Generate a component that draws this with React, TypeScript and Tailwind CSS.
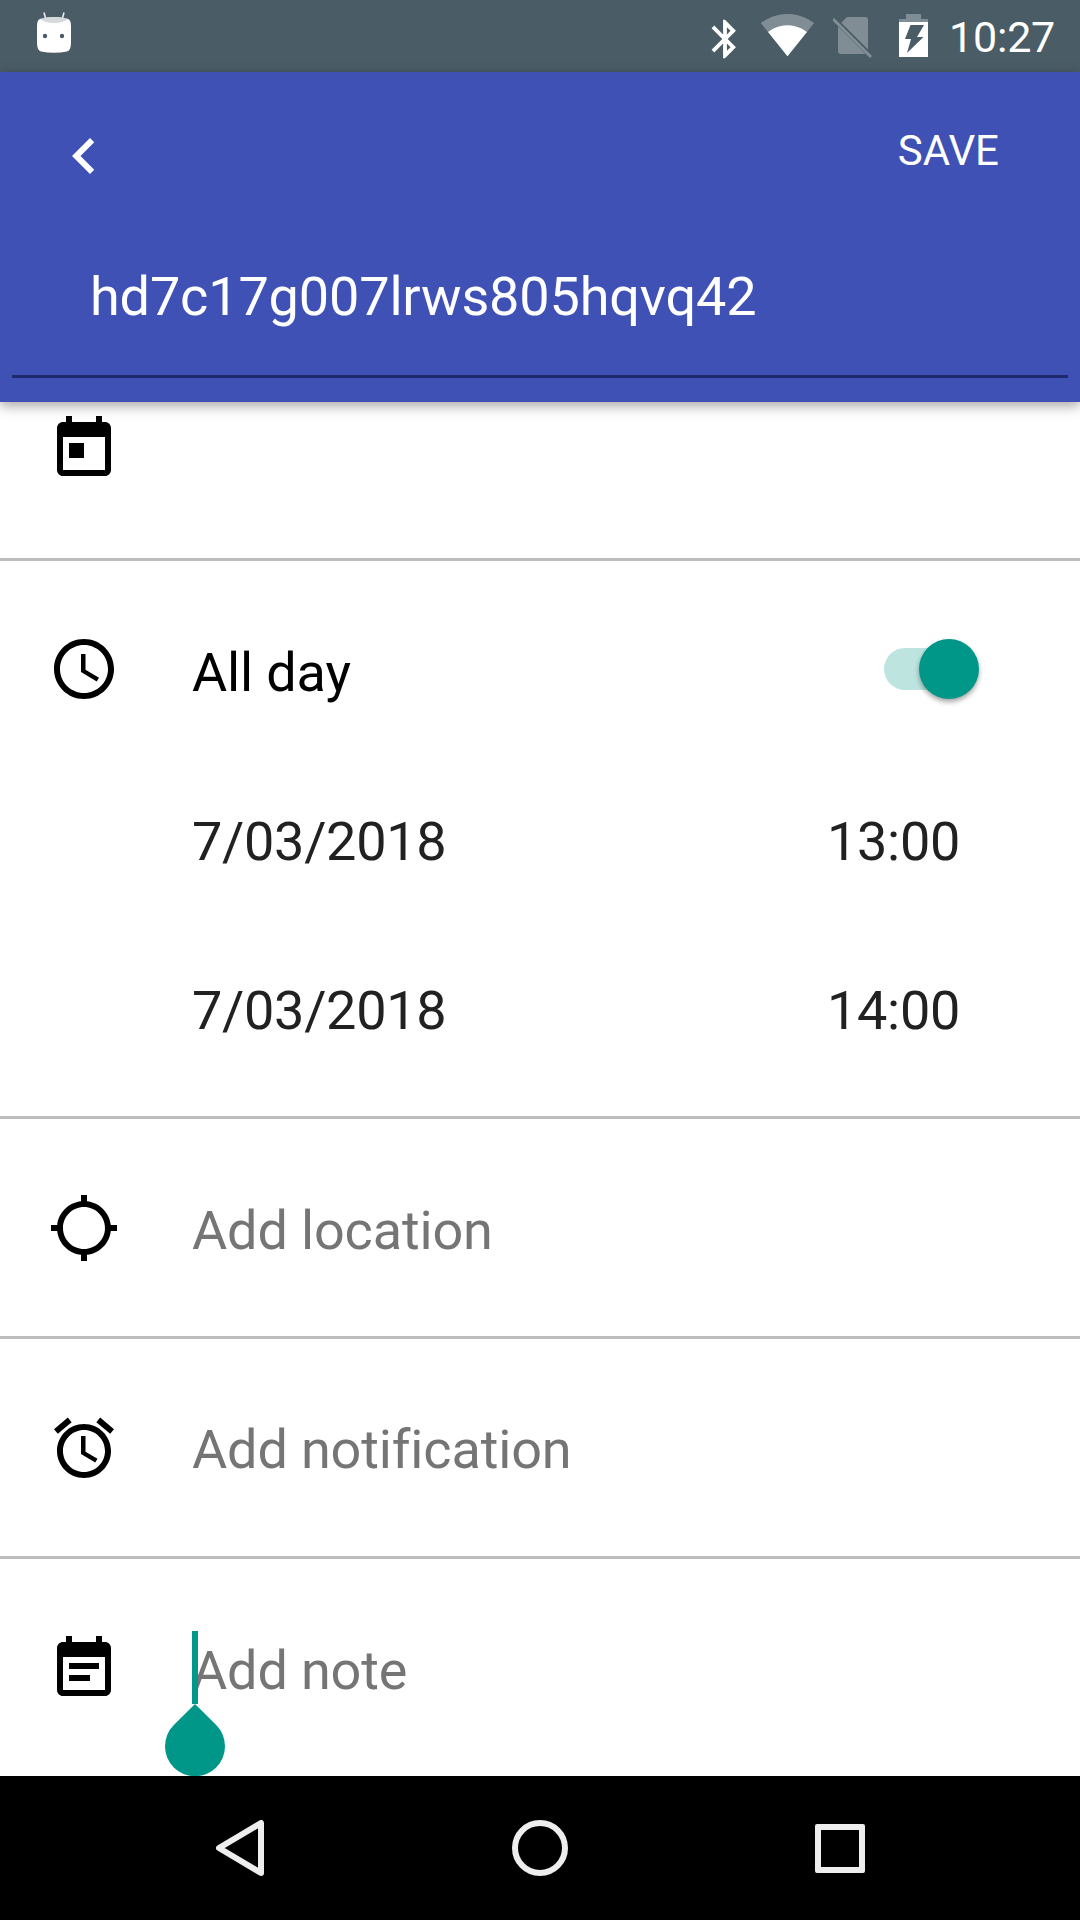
const ICONS = {
  today: "M19 3h-1V1h-2v2H8V1H6v2H5c-1.11 0-1.99.9-1.99 2L3 19c0 1.1.89 2 2 2h14c1.1 0 2-.9 2-2V5c0-1.1-.9-2-2-2zm0 16H5V8h14v11zM7 10h5v5H7z",
  clock: "M11.99 2C6.47 2 2 6.48 2 12s4.47 10 9.99 10C17.52 22 22 17.52 22 12S17.52 2 11.99 2zM12 20c-4.42 0-8-3.58-8-8s3.58-8 8-8 8 3.58 8 8-3.58 8-8 8zm.5-13H11v6l5.25 3.15.75-1.23-4.5-2.67z",
  location: "M20.94 11c-.46-4.17-3.77-7.48-7.94-7.94V1h-2v2.06C6.83 3.52 3.52 6.83 3.06 11H1v2h2.06c.46 4.17 3.77 7.48 7.94 7.94V23h2v-2.06c4.17-.46 7.48-3.77 7.94-7.94H23v-2h-2.06zM12 19c-3.87 0-7-3.13-7-7s3.13-7 7-7 7 3.13 7 7-3.13 7-7 7z",
  alarm: "M22 5.72l-4.6-3.86-1.29 1.53 4.6 3.86L22 5.72zM7.88 3.39L6.6 1.86 2 5.71l1.29 1.53 4.59-3.85zM12.5 8H11v6l4.75 2.85.75-1.23-4-2.37V8zM12 4c-4.97 0-9 4.03-9 9s4.03 9 9 9 9-4.03 9-9-4.03-9-9-9zm0 16c-3.87 0-7-3.13-7-7s3.13-7 7-7 7 3.13 7 7-3.13 7-7 7z",
  note: "M17 10H7v2h10v-2zm2-7h-1V1h-2v2H8V1H6v2H5c-1.11 0-1.99.9-1.99 2L3 19c0 1.1.89 2 2 2h14c1.1 0 2-.9 2-2V5c0-1.1-.9-2-2-2zm0 16H5V8h14v11zm-5-5H7v2h7v-2z",
};

function RowIcon({ d }: { d: string }) {
  return (
    <svg viewBox="0 0 24 24" className="w-[72px] h-[72px] shrink-0 fill-black">
      <path d={d} />
    </svg>
  );
}

function StatusBar() {
  return (
    <div className="h-[72px] shrink-0 bg-[#4a5c66] flex items-start">
      {/* notification: android robot */}
      <svg viewBox="0 0 34 41" className="w-[34px] h-[41px] ml-[37px] mt-[12px]">
        <path d="M7 0.5 L9 8 M27 0.5 L25 8" stroke="#e8eaeb" strokeWidth="1.6" fill="none" />
        <path d="M3 7 Q17 3 31 7 Q34 8 34 14 L34 31 Q34 38 30 39.5 Q17 42 4 39.5 Q0 38 0 31 L0 14 Q0 8 3 7Z" fill="#fff" />
        <path d="M3 7 Q17 3 31 7 Q26 11 17 11 Q8 11 3 7Z" fill="#d5d9db" />
        <circle cx="8" cy="24" r="2.2" fill="#4a5c66" />
        <circle cx="25" cy="24" r="2.2" fill="#4a5c66" />
      </svg>

      <svg viewBox="0 0 24 24" className="w-[46px] h-[46px] ml-[631px] mt-[16px] fill-white">
        <path d="M17.71 7.71L12 2h-1v7.59L6.41 5 5 6.41 10.59 12 5 17.59 6.41 19 11 14.41V22h1l5.71-5.71-4.3-4.29 4.3-4.29zM13 5.83l1.88 1.88L13 9.59V5.83zm1.88 10.46L13 18.17v-3.76l1.88 1.88z" />
      </svg>

      <svg viewBox="0 0 24 24" className="w-[55px] h-[55px] ml-[12px] mt-[7px]">
        <path fill="#fff" fillOpacity="0.3" d="M12.01 21.49L23.64 7c-.45-.34-4.93-4-11.64-4C5.28 3 .81 6.66.36 7l11.63 14.49.01.01.01-.01z" />
        <path fill="#fff" d="M3.53 10.95l8.46 10.54.01.01.01-.01 8.46-10.54C20.04 10.62 16.81 8 12 8c-4.81 0-8.04 2.62-8.47 2.95z" />
      </svg>

      {/* no sim */}
      <svg viewBox="0 0 40 42" className="w-[40px] h-[42px] ml-[18px] mt-[16px]">
        <path d="M14 1 L32 1 Q35 1 35 4 L35 35 Q35 38 32 38 L8 38 Q5 38 5 35 L5 10Z" fill="#fff" fillOpacity="0.3" />
        <path d="M1 3 L38 40" stroke="#4a5c66" strokeWidth="5" />
        <path d="M0 3 L38 41" stroke="#808e95" strokeWidth="3" />
      </svg>

      <svg viewBox="0 0 29 43" className="w-[29px] h-[43px] ml-[26px] mt-[14px]">
        <path d="M7 0 H22 V5 H29 V9 H0 V5 H7Z" fill="#fff" fillOpacity="0.3" />
        <path
          fillRule="evenodd"
          d="M0 8 H29 V43 H0Z M11.5 11 L6 25 L12 25 L8 39 L24.5 23 L18 23 L25 11Z"
          fill="#fff"
        />
      </svg>

      <span className="ml-[21px] mt-[12px] text-[43px] tracking-[-0.2px] leading-[50px] text-white">10:27</span>
    </div>
  );
}

function AppBar() {
  return (
    <div className="relative z-10 h-[330px] shrink-0 bg-[#3f51b5] shadow-[0_4px_12px_rgba(0,0,0,0.35)] px-[12px]">
      <div className="flex justify-between items-start pt-[48px] pl-[36px] pr-[69px]">
        <svg viewBox="0 0 24 24" className="w-[72px] h-[72px] fill-white">
          <path d="M15.41 7.41L14 6l-6 6 6 6 1.41-1.41L10.83 12z" />
        </svg>
        <span className="mt-[7px] text-[42px] leading-[48px] text-white">SAVE</span>
      </div>
      <div className="mt-[63px] h-[123px] pl-[78px] border-b-[3px] border-[#1f2a6e] text-[54px] tracking-[-0.15px] leading-[84px] text-white">
        hd7c17g007lrws805hqvq42
      </div>
    </div>
  );
}

function HintRow({ icon, label, textClass, divider }: { icon: string; label: string; textClass: string; divider?: boolean }) {
  return (
    <div className={`h-[220px] flex items-center pl-[48px] ${divider ? "border-b-[3px] border-[#bdbdbd]" : ""}`}>
      <RowIcon d={icon} />
      <span className={`ml-[72px] text-[54px] tracking-[-0.15px] leading-[64px] text-[#757575] ${textClass}`}>{label}</span>
    </div>
  );
}

function DateRow({ date, time }: { date: string; time: string }) {
  return (
    <div className="h-[169px] flex items-center justify-between pl-[192px] pr-[120px] text-[54px] text-[#212121]">
      <span className="mt-[7px] tracking-[-0.3px]">{date}</span>
      <span className="mt-[7px] tracking-[-0.3px]">{time}</span>
    </div>
  );
}

export default function App() {
  return (
    <div className="relative w-[1080px] h-[1920px] overflow-hidden flex flex-col bg-white font-['Roboto',sans-serif]">
      <StatusBar />
      <AppBar />

      <div className="flex-1 min-h-0">
        <div className="h-[159px] pl-[48px] pt-[11px] border-b-[3px] border-[#bdbdbd]">
          <RowIcon d={ICONS.today} />
        </div>

        <div className="h-[558px] pt-[24px] border-b-[3px] border-[#bdbdbd]">
          <div className="h-[168px] flex items-center pl-[48px]">
            <RowIcon d={ICONS.clock} />
            <span className="ml-[72px] mt-[7px] text-[54px] tracking-[-0.15px] text-black">All day</span>
            <div className="relative ml-auto mr-[112px] w-[84px] h-[42px] rounded-full bg-[#bde4df]">
              <div className="absolute right-[-11px] top-[-9px] w-[60px] h-[60px] rounded-full bg-[#009688] shadow-[0_3px_5px_rgba(0,0,0,0.35)]" />
            </div>
          </div>
          <DateRow date="7/03/2018" time="13:00" />
          <DateRow date="7/03/2018" time="14:00" />
        </div>

        <HintRow icon={ICONS.location} label="Add location" textClass="mt-[7px]" divider />
        <HintRow icon={ICONS.alarm} label="Add notification" textClass="mt-[5px]" divider />
        <HintRow icon={ICONS.note} label="Add note" textClass="mt-[3px]" />
      </div>

      {/* text cursor + drag handle */}
      <div className="absolute left-[192px] top-[1631px] w-[6px] h-[73px] bg-[#009688]" />
      <svg viewBox="0 0 60 72" className="absolute left-[165px] top-[1704px] w-[60px] h-[72px] fill-[#009688]">
        <path d="M30 0 L51.2 21 A30 30 0 1 1 8.8 21 Z" />
      </svg>

      <div className="h-[144px] shrink-0 bg-black flex items-center pl-[216px] gap-[247px]">
        <svg viewBox="0 0 48 56" className="w-[48px] h-[56px] fill-none stroke-[#eeeeee] stroke-[6px]" strokeLinejoin="round">
          <path d="M45 3 V53 L3 28Z" />
        </svg>
        <div className="ml-[1px] w-[56px] h-[56px] rounded-full border-[6px] border-[#eeeeee]" />
        <div className="w-[50px] h-[49px] rounded-[2px] border-[6px] border-[#eeeeee]" />
      </div>
    </div>
  );
}
